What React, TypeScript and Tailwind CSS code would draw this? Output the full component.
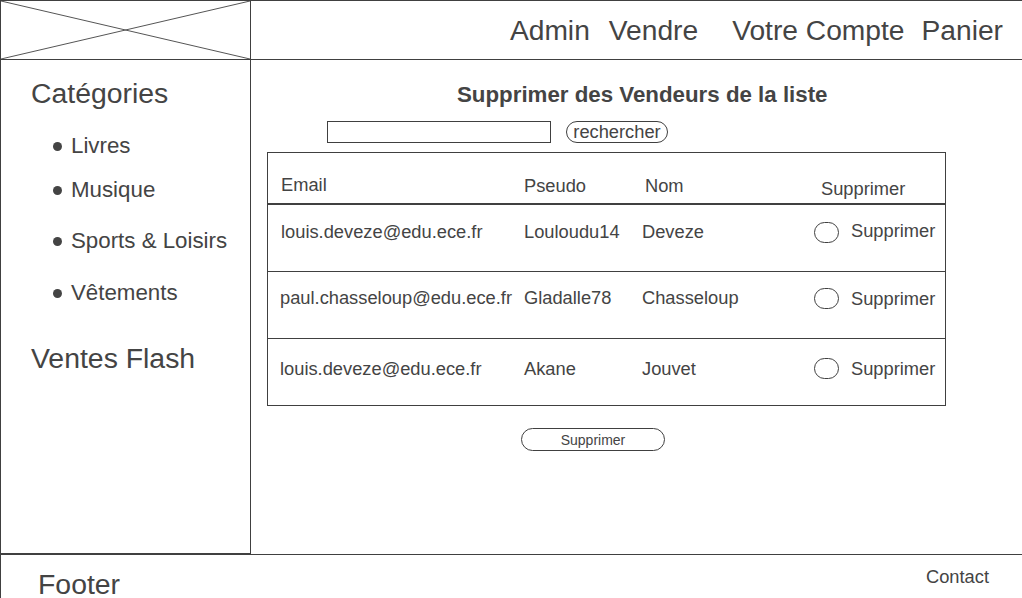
const categories = [
  { name: "Livres", mt: "mt-[24px]" },
  { name: "Musique", mt: "mt-[18px]" },
  { name: "Sports & Loisirs", mt: "mt-[25px]" },
  { name: "Vêtements", mt: "mt-[26px]" },
];

const vendeurs = [
  { email: "louis.deveze@edu.ece.fr", pseudo: "Louloudu14", nom: "Deveze", pl: "pl-[13px]", pt: "pt-[17px]", rpt: "pt-[17px]", spt: "pt-[16px]" },
  { email: "paul.chasseloup@edu.ece.fr", pseudo: "Gladalle78", nom: "Chasseloup", pl: "pl-[12px]", pt: "pt-[16px]", rpt: "pt-[16px]", spt: "pt-[17px]" },
  { email: "louis.deveze@edu.ece.fr", pseudo: "Akane", nom: "Jouvet", pl: "pl-[12px]", pt: "pt-[20px]", rpt: "pt-[19px]", spt: "pt-[20px]" },
];

export default function App() {
  return (
    <div
      className="w-[1022px] h-[598px] overflow-hidden bg-white text-[#444] border-l border-[#404040] flex flex-col"
      style={{ fontFamily: '"Liberation Sans", Arial, sans-serif' }}
    >
      {/* Header */}
      <header className="h-[60px] shrink-0 flex border-t border-b border-[#404040]">
        <div className="w-[250px] h-full border-r border-[#404040]">
          <svg width="249" height="58" viewBox="0 0 249 58" className="block">
            <line x1="0" y1="0" x2="249" y2="58" stroke="#555" strokeWidth="1" />
            <line x1="0" y1="58" x2="249" y2="0" stroke="#555" strokeWidth="1" />
          </svg>
        </div>
        <nav className="flex-1 flex justify-end items-center pr-[19px] text-[28.2px] leading-[32px]">
          <span>Admin</span>
          <span className="ml-[19px]">Vendre</span>
          <span className="ml-[34px]">Votre Compte</span>
          <span className="ml-[17px]">Panier</span>
        </nav>
      </header>

      <div className="h-[494px] shrink-0 flex">
        {/* Sidebar */}
        <aside className="w-[250px] h-full border-r border-b border-[#404040] pl-[30px] pt-[17px]">
          <h2 className="text-[28.4px] leading-[32px]">Catégories</h2>
          <ul>
            {categories.map((c) => (
              <li key={c.name} className={`${c.mt} ml-[22px] flex items-center gap-[9px] text-[22.3px] leading-[26px]`}>
                <span className="w-[9px] h-[9px] rounded-full bg-[#444]" />
                {c.name}
              </li>
            ))}
          </ul>
          <h2 className="mt-[36px] text-[28.4px] leading-[32px]">Ventes Flash</h2>
        </aside>

        {/* Main */}
        <main className="flex-1 pt-[22px]">
          <h1 className="ml-[206px] text-[22.3px] leading-[26px] font-bold">Supprimer des Vendeurs de la liste</h1>
          <div className="mt-[13px] flex items-center">
            <input className="ml-[76px] w-[224px] h-[22px] border border-[#404040] outline-none" />
            <button className="ml-[15px] w-[102px] h-[22px] rounded-full border border-[#404040] text-[18.3px] leading-[20px]">
              rechercher
            </button>
          </div>

          <div className="ml-[16px] mt-[9px] w-[679px] border border-[#404040]">
            <div className="h-[52px] flex border-b-2 border-[#404040] text-[18.3px] leading-[20px]">
              <span className="w-[256px] pl-[13px] pt-[22px]">Email</span>
              <span className="w-[121px] pt-[23px]">Pseudo</span>
              <span className="w-[176px] pt-[23px]">Nom</span>
              <span className="pt-[26px]">Supprimer</span>
            </div>
            {vendeurs.map((v, i) => (
              <div
                key={i}
                className={`flex text-[18.3px] leading-[20px] ${i < vendeurs.length - 1 ? "h-[67px] border-b border-[#404040]" : "h-[66px]"}`}
              >
                <span className={`w-[256px] ${v.pl} ${v.pt}`}>{v.email}</span>
                <span className={`w-[118px] ${v.pt}`}>{v.pseudo}</span>
                <span className={`w-[172px] ${v.pt}`}>{v.nom}</span>
                <div className={`flex ${v.rpt}`}>
                  <span className="w-[25px] h-[21px] rounded-full border border-[#404040]" />
                </div>
                <span className={`ml-[12px] ${v.spt}`}>Supprimer</span>
              </div>
            ))}
          </div>

          <button className="ml-[270px] mt-[22px] w-[144px] h-[23px] rounded-full border border-[#404040] text-[14px] leading-[16px]">
            Supprimer
          </button>
        </main>
      </div>

      {/* Footer */}
      <footer className="flex-1 flex justify-between border-t border-[#404040]">
        <span className="ml-[37px] pt-[13px] text-[28.4px] leading-[32px]">Footer</span>
        <span className="mr-[33px] pt-[12px] text-[18.3px] leading-[20px]">Contact</span>
      </footer>
    </div>
  );
}
